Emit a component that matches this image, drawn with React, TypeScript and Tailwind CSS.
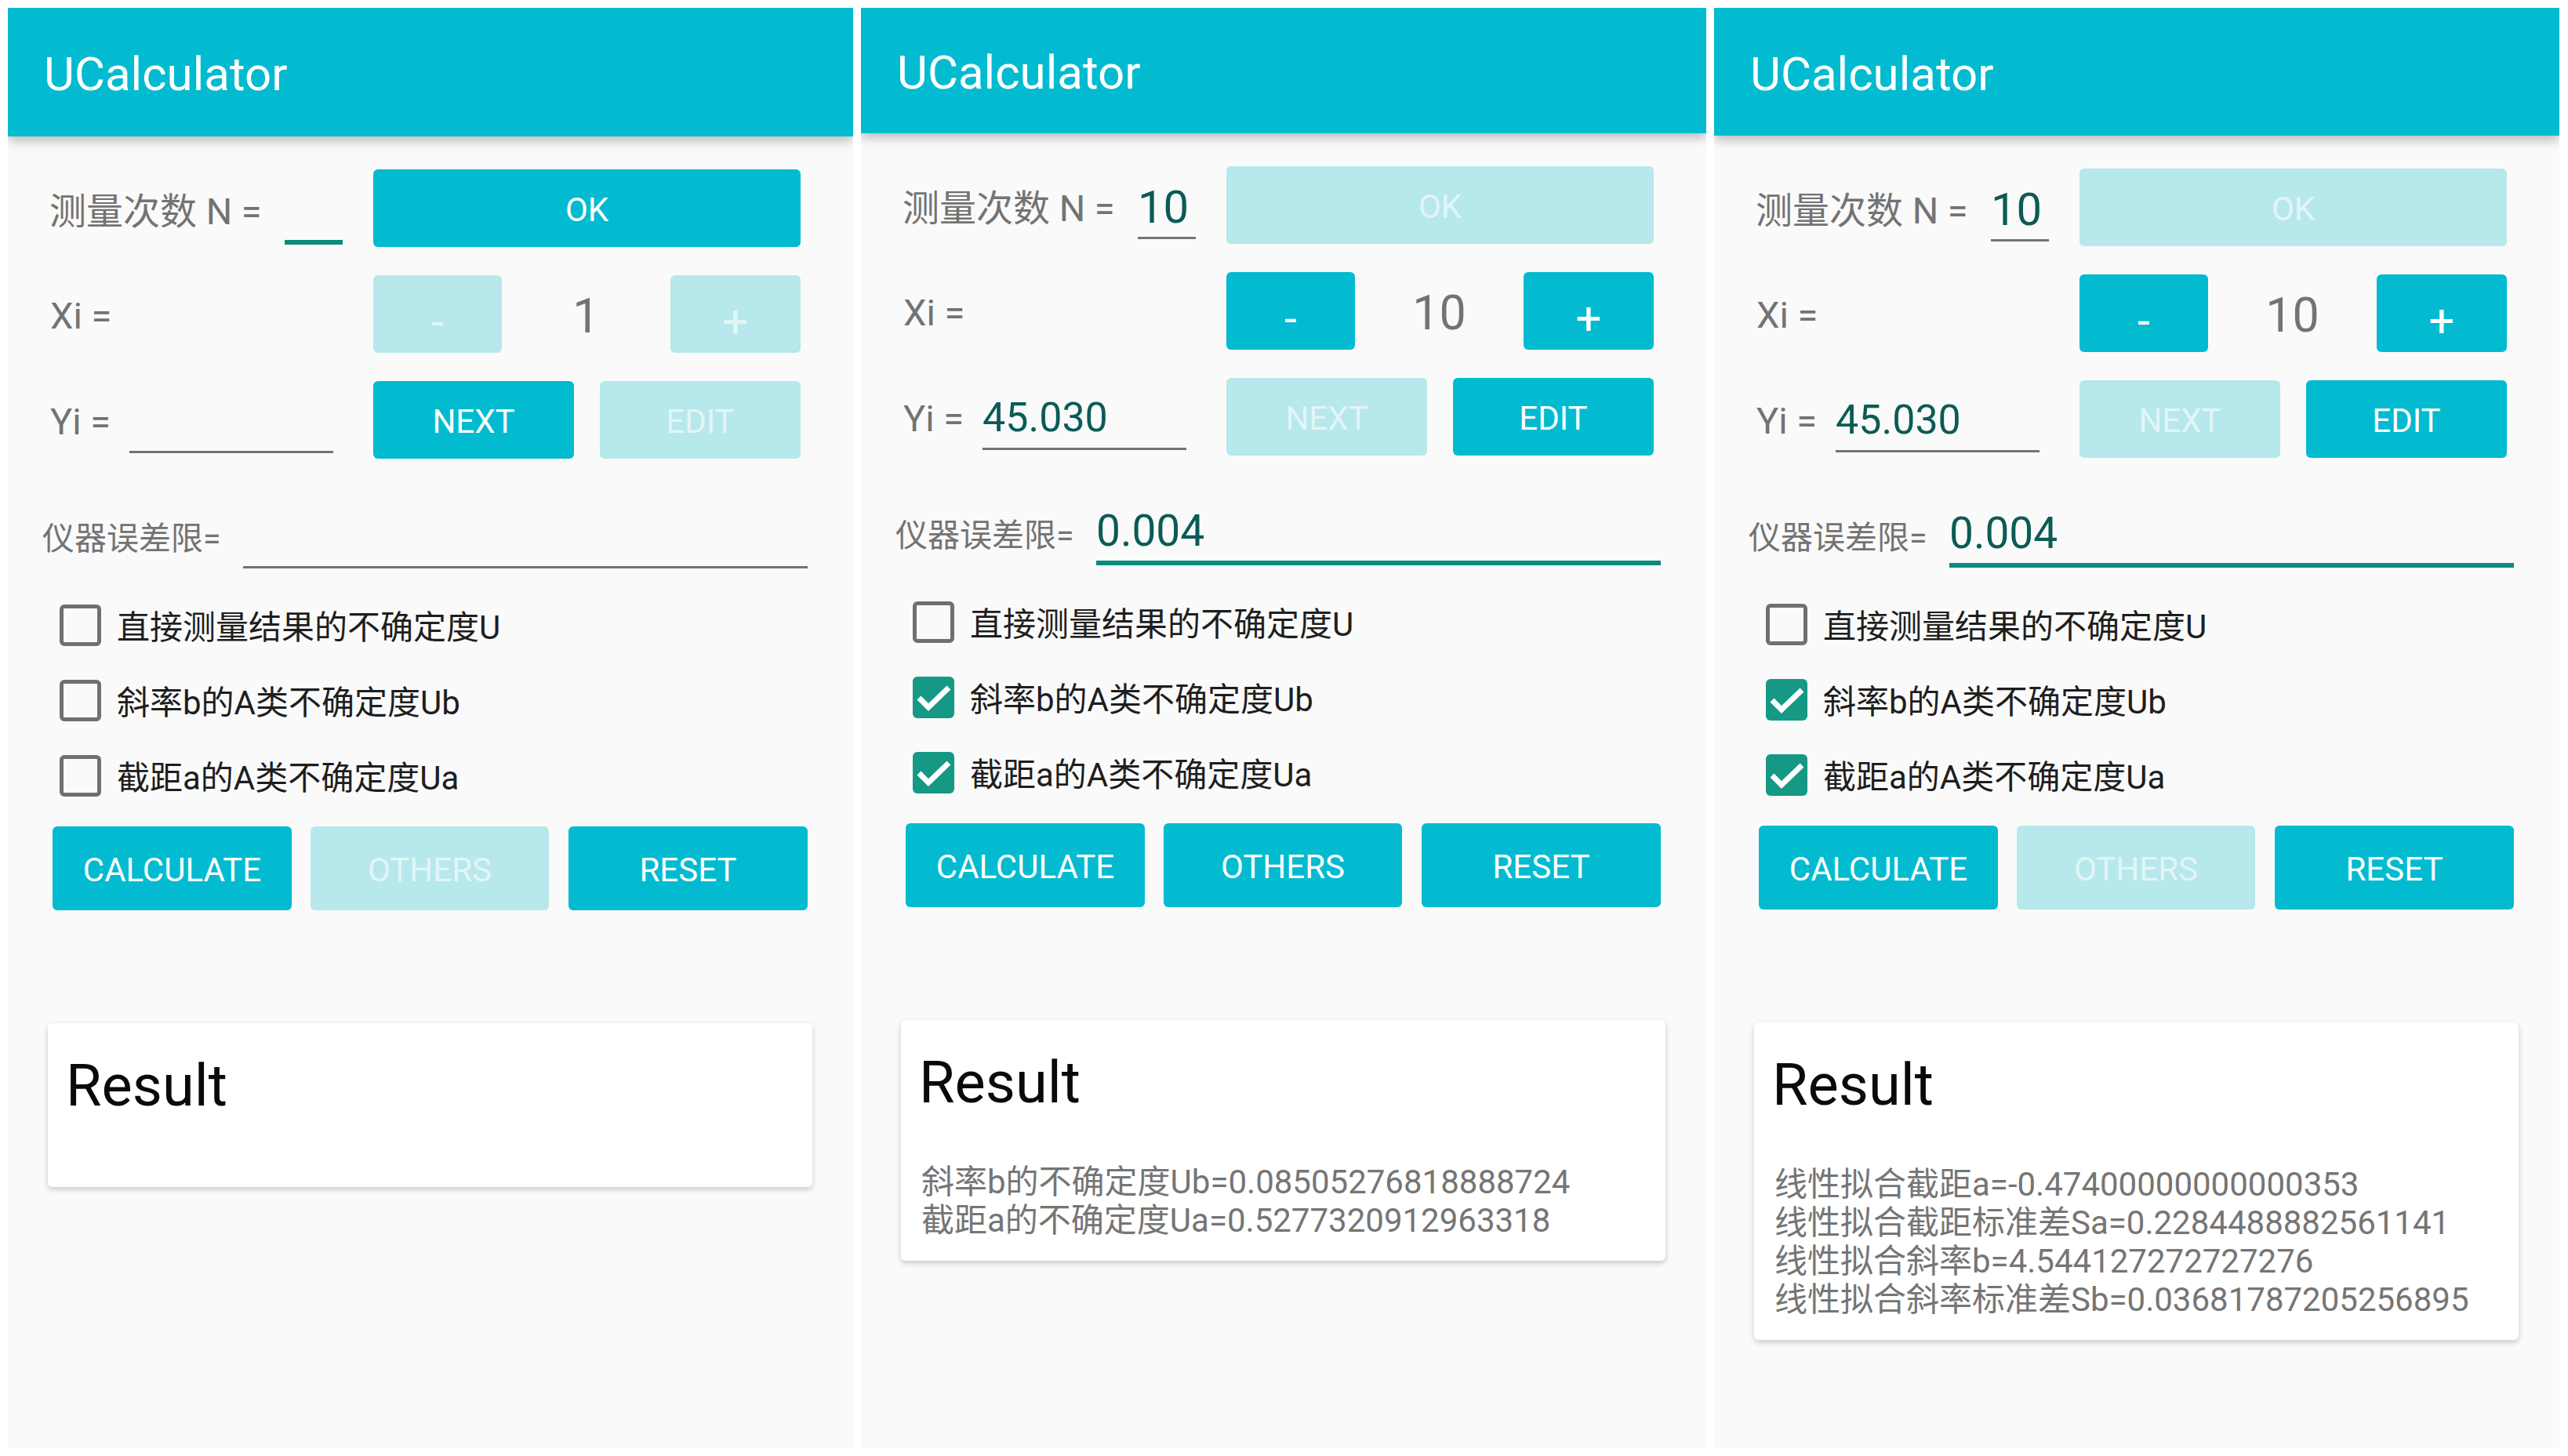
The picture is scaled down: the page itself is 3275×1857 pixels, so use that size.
import React from 'react';

type PanelData = {
  headerH: string;
  n: string;
  nFocused: boolean;
  xi: string;
  yi: string;
  err: string;
  errFocused: boolean;
  checks: boolean[];
  okOn: boolean;
  stepOn: boolean;
  nextOn: boolean;
  editOn: boolean;
  othersOn: boolean;
  lines: string[];
};

const panels: PanelData[] = [
  {
    headerH: 'h-[164px]',
    n: '',
    nFocused: true,
    xi: '1',
    yi: '',
    err: '',
    errFocused: false,
    checks: [false, false, false],
    okOn: true,
    stepOn: false,
    nextOn: true,
    editOn: false,
    othersOn: false,
    lines: [],
  },
  {
    headerH: 'h-[160px]',
    n: '10',
    nFocused: false,
    xi: '10',
    yi: '45.030',
    err: '0.004',
    errFocused: true,
    checks: [false, true, true],
    okOn: false,
    stepOn: true,
    nextOn: false,
    editOn: true,
    othersOn: true,
    lines: ['斜率b的不确定度Ub=0.08505276818888724', '截距a的不确定度Ua=0.5277320912963318'],
  },
  {
    headerH: 'h-[163px]',
    n: '10',
    nFocused: false,
    xi: '10',
    yi: '45.030',
    err: '0.004',
    errFocused: true,
    checks: [false, true, true],
    okOn: false,
    stepOn: true,
    nextOn: false,
    editOn: true,
    othersOn: false,
    lines: [
      '线性拟合截距a=-0.47400000000000353',
      '线性拟合截距标准差Sa=0.2284488882561141',
      '线性拟合斜率b=4.544127272727276',
      '线性拟合斜率标准差Sb=0.03681787205256895',
    ],
  },
];

const checkLabels = ['直接测量结果的不确定度U', '斜率b的A类不确定度Ub', '截距a的A类不确定度Ua'];

function Btn({
  on,
  className,
  children,
  text = 'text-[42px] pt-[5px]',
}: {
  on: boolean;
  className: string;
  children: React.ReactNode;
  text?: string;
}) {
  return (
    <button
      type="button"
      className={`${className} ${text} shrink-0 rounded-[6px] flex items-center justify-center leading-none ${
        on ? 'bg-[#02bbd0] text-white' : 'bg-[#b7e8eb] text-[#e2f5f7]'
      }`}
    >
      {children}
    </button>
  );
}

function Check({ on }: { on: boolean }) {
  if (!on) {
    return <div className="w-[53px] h-[53px] shrink-0 rounded-[6px] border-[5px] border-[#707070]" />;
  }
  return (
    <div className="w-[53px] h-[53px] shrink-0 rounded-[6px] bg-[#159884]">
      <svg viewBox="0 0 53 53" className="w-[53px] h-[53px]">
        <path d="M8 27 L20 39 L46 14" fill="none" stroke="#ffffff" strokeWidth="7" />
      </svg>
    </div>
  );
}

function Panel({ data }: { data: PanelData }) {
  return (
    <div className="w-[1078px] h-[1837px] shrink-0 bg-[#fafafa] flex flex-col overflow-hidden">
      <header
        className={`${data.headerH} relative z-10 shrink-0 bg-[#02bbd0] shadow-[0_5px_14px_rgba(0,0,0,0.28)] flex items-center pl-[46px] pt-[6px]`}
      >
        <h1 className="text-[60px] leading-none text-white">UCalculator</h1>
      </header>

      {/* measurement count */}
      <div className="mt-[42px] h-[99px] flex items-center">
        <div className="w-[353px] shrink-0 pl-[53px] pt-[8px] text-[47px] leading-none text-[#737373] whitespace-nowrap">
          测量次数 N =
        </div>
        <div
          className={`w-[74px] h-[80px] shrink-0 self-end flex items-end pb-[9px] text-[58px] leading-none text-[#0b5b56] ${
            data.nFocused ? 'border-b-[6px] border-[#0a8c7e] mb-[3px]' : 'border-b-[3px] border-[#737373] mb-[6px]'
          }`}
        >
          {data.n}
        </div>
        <Btn on={data.okOn} className="ml-[39px] w-[545px] h-full">
          OK
        </Btn>
      </div>

      {/* Xi */}
      <div className="mt-[36px] h-[99px] flex items-center">
        <div className="w-[466px] shrink-0 pl-[54px] pt-[4px] text-[47px] leading-none text-[#737373]">Xi =</div>
        <Btn on={data.stepOn} className="w-[164px] h-full" text="text-[58px] pt-[18px]">
          -
        </Btn>
        <div className="w-[215px] shrink-0 pt-[6px] text-center text-[61px] leading-none text-[#737373]">{data.xi}</div>
        <Btn on={data.stepOn} className="w-[166px] h-full" text="text-[58px] pt-[18px]">
          +
        </Btn>
      </div>

      {/* Yi */}
      <div className="mt-[36px] h-[99px] flex">
        <div className="w-[155px] shrink-0 self-center pl-[54px] pt-[4px] text-[47px] leading-none text-[#737373]">Yi =</div>
        <div className="w-[260px] h-[80px] shrink-0 self-end mb-[7px] flex items-end pb-[12px] border-b-[3px] border-[#737373] text-[52px] leading-none text-[#0b5b56]">
          {data.yi}
        </div>
        <Btn on={data.nextOn} className="ml-[51px] w-[256px] h-full">
          NEXT
        </Btn>
        <Btn on={data.editOn} className="ml-[33px] w-[256px] h-full">
          EDIT
        </Btn>
      </div>

      {/* instrument error */}
      <div className="mt-[40px] h-[100px] flex items-end">
        <div className="w-[300px] shrink-0 pl-[44px] mb-[17px] text-[41px] leading-none text-[#737373] whitespace-nowrap">
          仪器误差限=
        </div>
        <div
          className={`w-[720px] h-[80px] shrink-0 flex items-end text-[55px] leading-none text-[#0b5b56] ${
            data.errFocused ? 'border-b-[6px] border-[#0a8c7e] pb-[10px]' : 'border-b-[3px] border-[#737373] pb-[13px]'
          }`}
        >
          {data.err}
        </div>
      </div>

      {/* options */}
      <div className="mt-[24px] flex flex-col">
        {checkLabels.map((t, i) => (
          <div key={t} className="h-[96px] flex items-center">
            <div className="ml-[66px]">
              <Check on={data.checks[i]} />
            </div>
            <span className="ml-[20px] pt-[8px] text-[42px] leading-none text-[#1e1e1e] whitespace-nowrap">{t}</span>
          </div>
        ))}
      </div>

      <div className="mt-[17px] h-[107px] flex">
        <Btn on={true} className="ml-[57px] w-[305px] h-full">
          CALCULATE
        </Btn>
        <Btn on={data.othersOn} className="ml-[24px] w-[304px] h-full">
          OTHERS
        </Btn>
        <Btn on={true} className="ml-[25px] w-[305px] h-full">
          RESET
        </Btn>
      </div>

      {/* result card */}
      <div className="mt-[144px] ml-[51px] w-[975px] shrink-0 bg-white rounded-[6px] shadow-[0_3px_7px_rgba(0,0,0,0.2)] pt-[43px] pb-[27px] pl-[23px]">
        <div className="text-[74px] leading-none text-[#0a0a0a]">Result</div>
        <div className="mt-[65px] pl-[3px] text-[42px] leading-[49px] text-[#757575]">
          {data.lines.map((l) => (
            <div key={l} className="whitespace-nowrap">
              {l}
            </div>
          ))}
        </div>
      </div>
    </div>
  );
}

export default function App() {
  return (
    <div className="min-h-screen bg-white font-['Roboto','Noto_Sans_CJK_SC',sans-serif]">
      <div className="flex gap-[10px] pt-[10px] pl-[10px]">
        {panels.map((p, i) => (
          <Panel key={i} data={p} />
        ))}
      </div>
    </div>
  );
}
